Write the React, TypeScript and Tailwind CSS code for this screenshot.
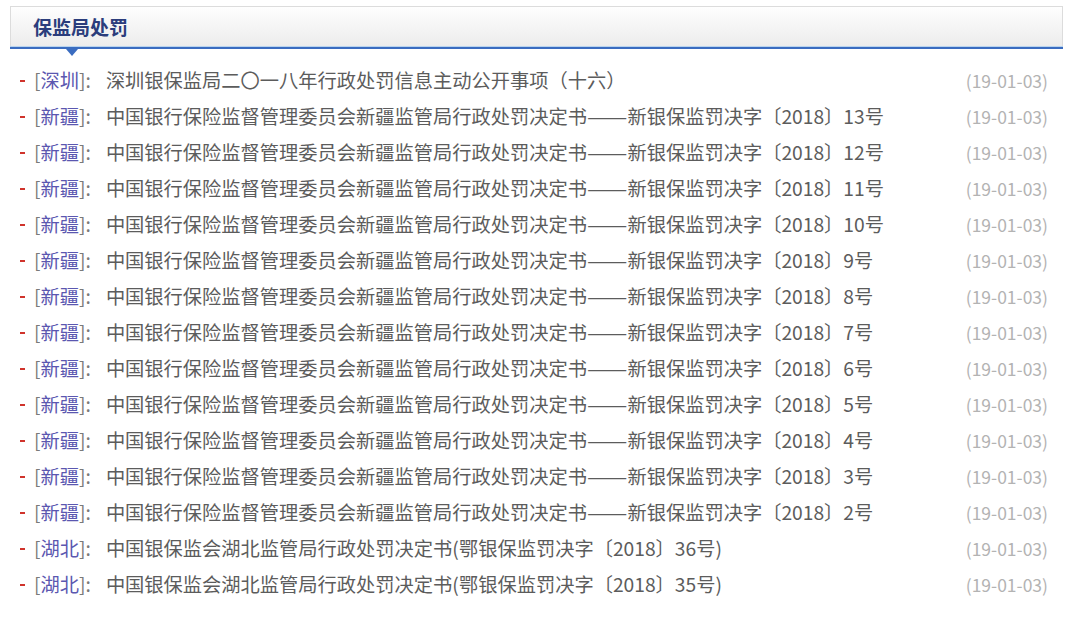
const items: { region: string; title: string; date: string }[] = [
  { region: "深圳", title: "深圳银保监局二〇一八年行政处罚信息主动公开事项（十六）", date: "19-01-03" },
  ...[13, 12, 11, 10, 9, 8, 7, 6, 5, 4, 3, 2].map((n) => ({
    region: "新疆",
    title: `中国银行保险监督管理委员会新疆监管局行政处罚决定书——新银保监罚决字〔2018〕${n}号`,
    date: "19-01-03",
  })),
  { region: "湖北", title: "中国银保监会湖北监管局行政处罚决定书(鄂银保监罚决字〔2018〕36号)", date: "19-01-03" },
  { region: "湖北", title: "中国银保监会湖北监管局行政处罚决定书(鄂银保监罚决字〔2018〕35号)", date: "19-01-03" },
];

function Title({ text }: { text: string }) {
  // the double dash is a touch wider in the original
  const parts = text.split("——");
  if (parts.length < 2) return <>{text}</>;
  return (
    <>
      {parts[0]}
      <span className="inline-block scale-x-[1.25] origin-left mr-[8px]">——</span>
      {parts[1]}
    </>
  );
}

export default function App() {
  return (
    <div
      className="w-[1080px] h-[621px] bg-white overflow-hidden pt-[6px]"
      style={{ fontFamily: '"Noto Sans CJK SC", "Noto Sans", sans-serif' }}
    >
      {/* Header */}
      <div className="relative mx-[10px] w-[1053px]">
        <div className="h-[40px] flex items-center pl-[22px] border border-b-0 border-[#dcdcdc] bg-gradient-to-b from-[#fefefe] to-[#ececec]">
          <span className="text-[19px] font-bold text-[#2b3d7c] leading-none">保监局处罚</span>
        </div>
        <div className="h-[1px] bg-[#b9d4ee]" />
        <div className="h-[2px] bg-[#3a6cc0]" />
        <div className="absolute left-[56px] top-[43px] w-0 h-0 border-l-[6px] border-r-[6px] border-t-[7px] border-l-transparent border-r-transparent border-t-[#3a6cc0]" />
      </div>

      {/* List */}
      <ul className="mt-[14px]">
        {items.map((it, i) => (
          <li key={i} className="h-[36px] flex items-center text-[19.25px] leading-none">
            <span className="ml-[20px] w-[5px] h-[2px] bg-[#d0342c]" />
            <span className="ml-[9px] text-[#7a7a7a]">[</span>
            <span className="text-[#5b57b0]">{it.region}</span>
            <span className="text-[#7a7a7a]">]:</span>
            <span className="ml-[15px] text-[#5c5c5c] whitespace-nowrap flex-1">
              <Title text={it.title} />
            </span>
            <span className="mr-[32px] text-[17.5px] text-[#b3b3b3] whitespace-nowrap">({it.date})</span>
          </li>
        ))}
      </ul>
    </div>
  );
}
